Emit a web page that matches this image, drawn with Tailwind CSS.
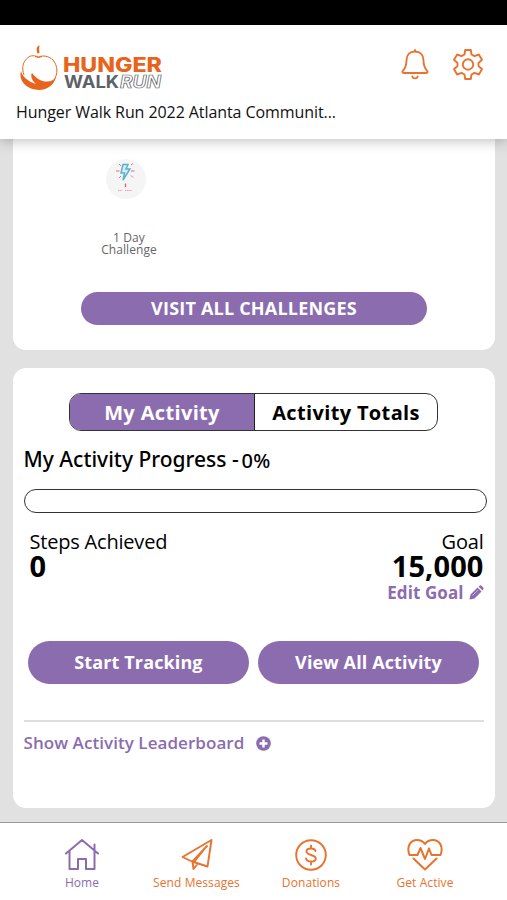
<!DOCTYPE html>
<html lang="en">
<head>
<meta charset="utf-8">
<meta name="viewport" content="width=device-width, initial-scale=1">
<title>Hunger Walk Run</title>
<script src="https://cdn.jsdelivr.net/npm/@tailwindcss/browser@4"></script>
</head>
<body class="bg-[#e1e1e1] font-['Open_Sans',sans-serif] text-black">
<div class="w-[507px] h-[900px] flex flex-col overflow-hidden">
  <div class="h-[25px] bg-black shrink-0"></div>
  <header class="relative z-10 h-[114px] shrink-0 bg-white shadow-[0_2px_12px_rgba(0,0,0,0.25)] px-4 pt-5">
    <div class="flex justify-between items-start h-[47px]">
      <svg class="ml-1" width="144" height="46" viewBox="20 45 144 46">
        <path d="M39 45.500C36.500 46.500 36 50 37.500 53.500L39.500 53C39 50 39 48 39.500 46Z" fill="#e8641c"/>
        <path d="M28 57.500C31 55 35 55.500 38.500 57C43 55 49 56 53 60C58 66 58 74 54 80" fill="none" stroke="#e8641c" stroke-width="1"/>
        <path d="M35 56.500Q38.500 58.500 42 56.500M28 57.500C22.500 62 21.500 68 24 75" fill="none" stroke="#e8641c" stroke-width="1"/>
        <path d="M21 71C22.500 77 28 81.500 36 84C32 80.500 30 76 32 73C36 78.500 42 82 48 81.500C52 81 54.500 79.500 56 77C54 84.500 48 90 39 90C27 90 18 81 21 71Z" fill="#e8641c"/>
        <text x="63" y="71.800" textLength="99" lengthAdjust="spacingAndGlyphs" class="font-['Inter',sans-serif] font-extrabold" font-size="19.600" fill="#e8641c">HUNGER</text>
        <text x="64" y="88" textLength="55" lengthAdjust="spacingAndGlyphs" class="font-['Inter',sans-serif] font-bold" font-size="17" fill="#5d6169">WALK</text>
        <text x="120" y="88" textLength="41" lengthAdjust="spacingAndGlyphs" class="font-['Inter',sans-serif] font-bold italic" font-size="17" fill="#fff" stroke="#5d6169" stroke-width=".7">RUN</text>
      </svg>
      <div class="flex gap-[22px] pt-[2px] pr-[7px]">
        <svg width="30" height="34" viewBox="0 0 30 34" fill="none" stroke="#e8732f" stroke-width="1.900" stroke-linecap="round" stroke-linejoin="round"><path d="M15 3V4.500M4 26C2 26 2 24.500 3.200 23.500C6 20 6.500 18 6.500 13.500C6.500 8 9.800 4.500 15 4.500S23.500 8 23.500 13.500C23.500 18 24 20 26.800 23.500C28 24.500 28 26 26 26ZM12.300 29.500C13 32 17 32 17.700 29.500"/></svg>
        <svg width="32" height="34" viewBox="0 0 32 34" fill="none" stroke="#e8732f" stroke-width="1.900" stroke-linejoin="round"><path d="M13.200 3H18.800L19.500 7.500L22.500 9.200L26.800 7.500L30 12.700L26.500 16V19L30 22.300L26.800 27.500L22.500 25.800L19.500 27.500L18.800 32H13.200L12.500 27.500L9.500 25.800L5.200 27.500L2 22.300L5.500 19V16L2 12.700L5.200 7.500L9.500 9.200L12.500 7.500Z"/><circle cx="16" cy="17.500" r="5.200"/></svg>
      </div>
    </div>
    <div class="mt-[10px] h-[20px] leading-[21px] text-[16px] tracking-[-0.080px] whitespace-nowrap overflow-hidden text-[#111]">Hunger Walk Run 2022 Atlanta Communit...</div>
  </header>
  <main class="flex-1 pl-[13px] pr-[12px]">
    <section class="h-[211px] bg-white rounded-b-[13px] flex flex-col">
      <div class="ml-[72px] w-[88px] pt-[20px] flex flex-col items-center">
        <svg class="-ml-[6px]" width="40" height="40" viewBox="0 0 40 40"><circle cx="20" cy="20" r="20" fill="#f5f5f5"/><path d="M17 5.500H22L20 10H24L17 21L18.500 14H15Z" fill="#d5edf4" stroke="#5ab3cc" stroke-width="1.500"/><path d="M13 5L15 7M25 6L27 4.500M10 12H13.500M25 12H28.500M13 19L15 17M25 16.500L27 18.500" stroke="#e66b8c" stroke-width="1"/><path d="M19.500 24.500V28" stroke="#ee5577" stroke-width="1.300"/><path d="M12 31.500H16M19 31.500H26" stroke="#f09aaa" stroke-width="1.200" stroke-dasharray="1.500 .6"/></svg>
        <div class="mt-[33px] text-center text-[12px] leading-[12px] tracking-[0.080px] text-[#666]"><p>1 Day</p><p>Challenge</p></div>
      </div>
      <button class="mt-[36px] mx-auto w-[346px] h-[33px] rounded-full bg-[#8b6caf] text-white font-bold text-[18px] leading-[33px] tracking-[0.200px]">VISIT ALL CHALLENGES</button>
    </section>
    <section class="mt-[18px] h-[440px] bg-white rounded-[13px] pt-[25px] pl-[10.500px] pr-[7.500px]">
      <div class="ml-[45.500px] w-[369px] h-[38px] flex border-[1.500px] border-[#333] rounded-[12px] overflow-hidden text-[20px] tracking-[0.350px] font-bold leading-[37px] text-center">
        <div class="w-[185px] bg-[#8b6caf] text-white border-r border-[#222]">My Activity</div>
        <div class="flex-1">Activity Totals</div>
      </div>
      <div class="mt-[13px] h-[30px] flex leading-[30px] text-[20px] font-medium font-['Noto_Sans',sans-serif]"><span class="w-[218px] whitespace-nowrap text-[21px]">My Activity Progress -</span><span class="pt-[2px] tracking-[0.300px]">0%</span></div>
      <div class="mt-[15px] w-[463px] h-[24px] rounded-full border-[1.500px] border-[#333]"></div>
      <div class="mt-[15px] flex justify-between pl-[6px] pr-[4px]">
        <div>
          <div class="text-[20px] tracking-[-0.200px] leading-[27px]">Steps Achieved</div>
          <div class="text-[29px] font-bold leading-[22px]">0</div>
        </div>
        <div class="flex flex-col items-end">
          <div class="text-[20px] tracking-[-0.200px] leading-[27px]">Goal</div>
          <div class="text-[29px] font-bold leading-[22px] tracking-[0.100px]">15,000</div>
          <div class="mt-[3px] flex items-center gap-[5px] text-[17px] font-bold leading-[26px] text-[#8b6caf] tracking-[0.080px]"><span>Edit Goal</span><svg class="-mt-[2px]" width="15" height="15" viewBox="0 0 15 15" fill="#8b6caf"><path d="M8.500 2.500L12.500 6.500L5.500 13.500L1 14.500L.5 14L1.500 9.500ZM9.500 1.500L10.500 .7Q11.500 0 12.500 .8L14.200 2.500Q15 3.500 14.300 4.500L13.500 5.500Z"/><path d="M3.500 10.500L9 5" stroke="#fff" stroke-width=".5"/></svg></div>
        </div>
      </div>
      <div class="mt-[35px] ml-[4.500px] flex gap-[9px] text-white text-[18px] tracking-[0.120px] font-bold">
        <button class="w-[221px] h-[43px] rounded-full bg-[#8b6caf]">Start Tracking</button>
        <button class="w-[221px] h-[43px] rounded-full bg-[#8b6caf]">View All Activity</button>
      </div>
      <div class="mt-[36px] w-[460px] h-[2px] bg-[#dedede]"></div>
      <div class="mt-[8px] flex items-center leading-[26px] text-[17px] font-semibold tracking-[0.060px] text-[#8b6caf]"><span class="w-[232.500px] whitespace-nowrap">Show Activity Leaderboard</span><svg width="15" height="15" viewBox="0 0 15 15"><circle cx="7.500" cy="7.500" r="7.300" fill="#8b6caf"/><path d="M7.500 3.500V11.500M3.500 7.500H11.500" stroke="#fff" stroke-width="2.400"/></svg></div>
    </section>
  </main>
  <nav class="h-[78px] shrink-0 bg-white border-t-[1.500px] border-[#999] pl-[25px] pr-[25px] pt-[15px] flex text-[12px] leading-[16px] tracking-[0.080px] text-[#e8732f] text-center">
    <div class="w-[114px] flex flex-col items-center gap-[3px] text-[#8b6caf]"><svg width="36" height="34" viewBox="0 0 36 34" fill="none" stroke="currentColor" stroke-width="2" stroke-linecap="round" stroke-linejoin="round"><path d="M2 15.500L18 2L34 15.500M5.500 13V31H14V21H22V31H30.500V13M30.500 11.500V6.500"/></svg>Home</div>
    <div class="w-[115px] flex flex-col items-center gap-[3px]"><svg width="34" height="34" viewBox="0 0 34 34" fill="none" stroke="currentColor" stroke-width="1.900" stroke-linecap="round" stroke-linejoin="round"><path d="M31.500 2L2.500 19L12 23.500L27.500 28.500L31.500 2M27 8L12.500 23.500L13.500 31L17.500 26M26 9L14.500 23.500"/></svg>Send Messages</div>
    <div class="w-[114px] flex flex-col items-center gap-[3px]"><svg width="34" height="34" viewBox="0 0 34 34" fill="none" stroke="currentColor" stroke-width="1.900" stroke-linecap="round"><circle cx="17" cy="17" r="14.800"/><path d="M17 7.500V10.500M17 23.500V26.500M21.500 13C20.500 9.500 12.500 9.500 12.500 13.500S21.800 16.500 21.800 20.500S13 24.500 12 20.500"/></svg>Donations</div>
    <div class="w-[114px] flex flex-col items-center gap-[3px]"><svg width="36" height="34" viewBox="0 0 36 34" fill="none" stroke="currentColor" stroke-width="2" stroke-linecap="round" stroke-linejoin="round"><path d="M2.500 17C-1 8 4 2 10 2C14 2 16.500 4 18 6C19.500 4 22 2 26 2C32 2 37 8 33.500 17H24.500L22 10.500L18 21L13.500 10L10.500 17H2.500M6.500 20.500L18 31.500L29.500 20.500"/></svg>Get Active</div>
  </nav>
</div>
</body>
</html>
